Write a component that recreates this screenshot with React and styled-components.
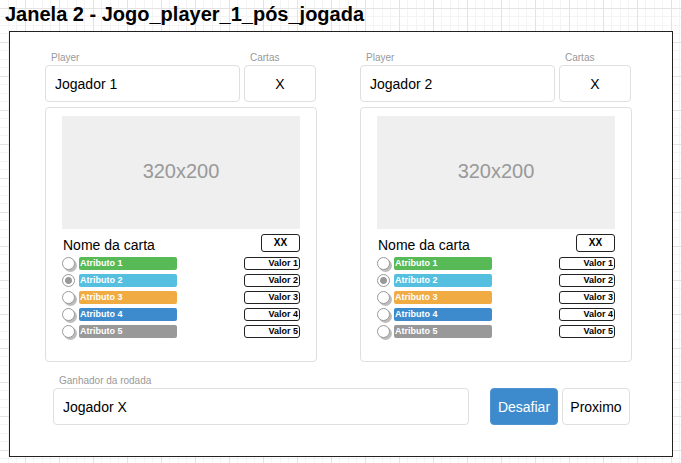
import React, { useState } from "react";
import styled, { createGlobalStyle } from "styled-components";

const GlobalStyle = createGlobalStyle`
  *, *::before, *::after { box-sizing: border-box; }
  body {
    margin: 0;
    font-family: "Liberation Sans", Arial, sans-serif;
    font-size: 14px;
    color: #000;
  }
  button, input { font: inherit; color: inherit; margin: 0; }
`;

const Canvas = styled.div`
  min-height: 100vh;
  padding: 0 8px 6px 9px;
  background-color: #fff;
  background-image:
    linear-gradient(to right, #e3e3e3 1px, transparent 1px),
    linear-gradient(to bottom, #e3e3e3 1px, transparent 1px),
    linear-gradient(to right, transparent 8px, #f4f4f4 8px 9px, transparent 9px 17px, #f4f4f4 17px 18px, transparent 18px 25px, #f4f4f4 25px 26px, transparent 26px),
    linear-gradient(to bottom, transparent 8px, #f4f4f4 8px 9px, transparent 9px 17px, #f4f4f4 17px 18px, transparent 18px 25px, #f4f4f4 25px 26px, transparent 26px);
  background-size: 34px 34px;
  background-position: 25px 8px;
`;

const Title = styled.h1`
  margin: 0 0 0 -4px;
  padding-bottom: 3px;
  font-size: 20px;
  line-height: 28px;
  white-space: nowrap;
`;

const Frame = styled.main`
  padding: 19px 40px 31px 35px;
  background: #fff;
  border: 1px solid #222;
`;

const Players = styled.div`
  display: grid;
  grid-template-columns: 1fr 1fr;
  gap: 43px;
`;

const FieldRow = styled.div`
  display: grid;
  grid-template-columns: minmax(0, 1fr) 72px;
  gap: 4px;
  padding-right: 1px;
  margin-bottom: 5px;
`;

const Field = styled.label`
  display: block;
  min-width: 0;
`;

const Caption = styled.span`
  display: block;
  padding-left: 6px;
  font-size: 10px;
  line-height: 14px;
  color: #999;
`;

const TextBox = styled.input`
  display: block;
  width: 100%;
  height: 37px;
  padding: 0 9px;
  border: 1px solid #dfdfdf;
  border-radius: 4px;
  background: #fff;
  text-align: ${(p) => (p.$centered ? "center" : "left")};
`;

const Card = styled.section`
  padding: 8px 16px 23px;
  border: 1px solid #dfdfdf;
  border-radius: 4px;
  background: #fff;
`;

const Placeholder = styled.div`
  display: flex;
  align-items: center;
  justify-content: center;
  height: 113px;
  padding-bottom: 2px;
  background: #efefef;
  color: #999;
  font-size: 20px;
`;

const CardHeader = styled.header`
  display: flex;
  justify-content: space-between;
  padding: 5px 0 4px 1px;
`;

const CardName = styled.h2`
  margin: 0;
  padding-top: 3px;
  font-size: 14px;
  font-weight: normal;
  line-height: 16px;
`;

const Score = styled.output`
  width: 39px;
  height: 18px;
  border: 1px solid #222;
  border-radius: 3px;
  font-size: 10px;
  font-weight: bold;
  line-height: 16px;
  text-align: center;
`;

const Attributes = styled.div`
  display: grid;
  gap: 4px;
`;

const AttributeRow = styled.div`
  display: grid;
  grid-template-columns: 13px 98px 1fr;
  align-items: center;
  column-gap: 4px;
  height: 13px;
`;

const Radio = styled.input`
  appearance: none;
  width: 13px;
  height: 13px;
  border: 1px solid #999;
  border-radius: 50%;
  background: #fff;
  box-shadow: 2px 2px 0 #bdbdbd;

  &:checked {
    background: radial-gradient(circle, #999 0 3px, #fff 4px);
    box-shadow: none;
  }
`;

const Bar = styled.label`
  height: 13px;
  padding-left: 1px;
  border-radius: 2px;
  background: ${(p) => p.$color};
  color: #fff;
  font-size: 9px;
  font-weight: bold;
  line-height: 12px;
`;

const Value = styled.output`
  justify-self: end;
  width: 56px;
  height: 13px;
  padding-right: 1px;
  border: 1px solid #222;
  border-radius: 3px;
  font-size: 9px;
  font-weight: bold;
  line-height: 11px;
  text-align: right;
`;

const RoundBar = styled.div`
  display: grid;
  grid-template-columns: minmax(0, 1fr) 68px 68px;
  align-items: end;
  gap: 4px;
  padding: 12px 2px 0 8px;
`;

const Winner = styled(Field)`
  margin-right: 17px;
`;

const Button = styled.button`
  height: 37px;
  padding: 0;
  border: 1px solid ${(p) => (p.$primary ? "#4f93d2" : "#dfdfdf")};
  border-radius: 4px;
  background: ${(p) => (p.$primary ? "#3d8bcd" : "#fff")};
  color: ${(p) => (p.$primary ? "#fff" : "#000")};
`;

const colors = ["#58b957", "#55bfe0", "#f0ac43", "#3d8bcd", "#999"];

function Player({ id, name }) {
  const [selected, setSelected] = useState(1);
  return (
    <div>
      <FieldRow>
        <Field>
          <Caption>Player</Caption>
          <TextBox defaultValue={name} />
        </Field>
        <Field>
          <Caption>Cartas</Caption>
          <TextBox $centered defaultValue="X" />
        </Field>
      </FieldRow>
      <Card>
        <Placeholder>320x200</Placeholder>
        <CardHeader>
          <CardName>Nome da carta</CardName>
          <Score>XX</Score>
        </CardHeader>
        <Attributes>
          {colors.map((color, i) => (
            <AttributeRow key={color}>
              <Radio
                type="radio"
                id={`${id}-${i}`}
                name={id}
                checked={selected === i}
                onChange={() => setSelected(i)}
              />
              <Bar htmlFor={`${id}-${i}`} $color={color}>Atributo {i + 1}</Bar>
              <Value>Valor {i + 1}</Value>
            </AttributeRow>
          ))}
        </Attributes>
      </Card>
    </div>
  );
}

export default function App() {
  return (
    <Canvas>
      <GlobalStyle />
      <Title>Janela 2 - Jogo_player_1_pós_jogada</Title>
      <Frame>
        <Players>
          <Player id="p1" name="Jogador 1" />
          <Player id="p2" name="Jogador 2" />
        </Players>
        <RoundBar>
          <Winner>
            <Caption>Ganhador da rodada</Caption>
            <TextBox defaultValue="Jogador X" />
          </Winner>
          <Button type="button" $primary>Desafiar</Button>
          <Button type="button">Proximo</Button>
        </RoundBar>
      </Frame>
    </Canvas>
  );
}
